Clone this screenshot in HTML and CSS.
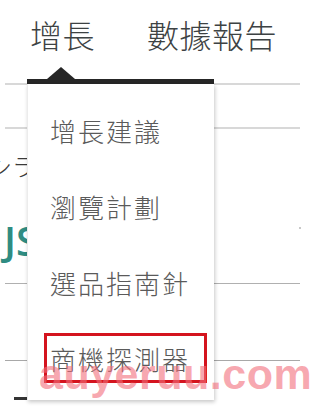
FILE: index.html
```html
<!DOCTYPE html>
<html lang="zh-Hant">
<head>
<meta charset="utf-8">
<link rel="stylesheet" href="styles.css">
</head>
<body>
<div class="page">
  <nav class="topnav">
    <span class="tab">增長</span>
    <span class="tab">數據報告</span>
  </nav>
  <div class="tabbar">
    <div class="indicator"></div>
  </div>
  <div class="bg">
    <div class="row row1"></div>
    <div class="row row2">
      <span class="frag">シラ</span>
      <span class="frag-teal">JS</span>
      <span class="dot"></span>
    </div>
    <div class="row row3"></div>
    <div class="row row4"></div>
    <div class="tail"></div>
  </div>

  <div class="dropdown">
    <div class="item">增長建議</div>
    <div class="item">瀏覽計劃</div>
    <div class="item">選品指南針</div>
    <div class="item highlight">商機探測器<span class="redbox"></span></div>
  </div>

  <div class="watermark">auyeruu.com</div>
</div>
</body>
</html>
```
FILE: styles.css
```css
html, body {
  margin: 0;
  padding: 0;
  background: #ffffff;
}
.page {
  position: relative;
  width: 315px;
  height: 409px;
  overflow: hidden;
  font-family: "Noto Sans CJK TC", "Noto Sans", sans-serif;
}
.topnav {
  display: flex;
  gap: 52px;
  padding: 16px 0 0 30px;
  height: 62px;
  box-sizing: border-box;
}
.tab {
  font-size: 32px;
  font-weight: 300;
  line-height: 36px;
  color: #3d4243;
  letter-spacing: 0.5px;
}
.tabbar {
  margin: 0 15px 0 5px;
  height: 21px;
  border-bottom: 2px solid #d8d8d8;
  position: relative;
}
.indicator {
  position: absolute;
  left: 22px;
  bottom: -1px;
  width: 187px;
  height: 5px;
  background: #262626;
}
.indicator::before {
  content: "";
  position: absolute;
  left: 20px;
  top: -12px;
  width: 0;
  height: 0;
  border-left: 14px solid transparent;
  border-right: 14px solid transparent;
  border-bottom: 12px solid #262626;
}
.bg {
  margin: 0 15px 0 5px;
}
.row {
  position: relative;
  box-sizing: border-box;
}
.row1 {
  height: 44px;
  border-bottom: 2px solid #d8d8d8;
}
.row2 {
  height: 155px;
  border-bottom: 1px solid #b0b0b0;
}
.row3 {
  height: 77px;
  border-bottom: 1px solid #a8a8a8;
}
.frag {
  position: absolute;
  left: -17px;
  top: 24px;
  font-size: 24px;
  font-weight: 300;
  line-height: 26px;
  color: #3a3a3a;
}
.frag-teal {
  position: absolute;
  left: -1px;
  top: 90px;
  font-family: "Open Sans", sans-serif;
  font-weight: 600;
  font-size: 40px;
  line-height: 44px;
  color: #2f8c82;
}
.dot {
  position: absolute;
  right: -1px;
  top: 98px;
  width: 2px;
  height: 2px;
  background: #c8c8c8;
}
.row4 {
  height: 36px;
}
.tail {
  width: 36px;
  height: 3px;
  margin-left: 9px;
  background: #333;
}
.dropdown {
  position: absolute;
  left: 27px;
  top: 84px;
  width: 187px;
  padding: 8px 0 4px;
  background: #ffffff;
  box-shadow: 1px 2px 4px rgba(0, 0, 0, 0.22);
  border-left: 1px solid #ececec;
  box-sizing: border-box;
  height: 316px;
}
.item {
  position: relative;
  height: 76px;
  display: flex;
  align-items: center;
  padding-left: 22px;
  font-size: 26px;
  font-weight: 300;
  letter-spacing: 2px;
  color: #5a5a5a;
}
.redbox {
  position: absolute;
  left: 16px;
  top: 13px;
  width: 163px;
  height: 50px;
  border: 3px solid #d4141e;
  box-sizing: border-box;
}
.watermark {
  position: absolute;
  left: 39px;
  top: 353px;
  font-family: "Liberation Sans", Arial, sans-serif;
  font-weight: bold;
  font-size: 43px;
  line-height: 42px;
  color: rgba(242, 110, 122, 0.6);
  letter-spacing: 0.5px;
}
```
